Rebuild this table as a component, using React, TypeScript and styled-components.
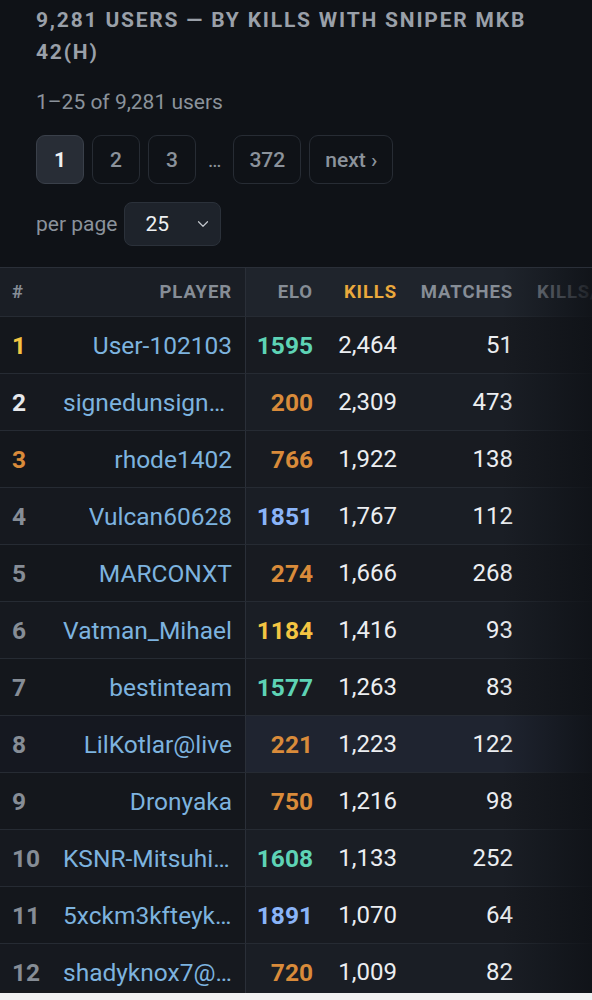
import React from 'react';
import styled, { createGlobalStyle } from 'styled-components';
import { ChevronDown } from 'lucide-react';

const GlobalStyle = createGlobalStyle`
  html, body {
    margin: 0;
    padding: 0;
    background: #0f1217;
  }
  body {
    font-family: Roboto, "Noto Sans", sans-serif;
    color: #e8eaed;
  }
  * { box-sizing: border-box; }
`;

type Player = {
  name: string;
  elo: number;
  kills: number;
  matches: number;
};

const players: Player[] = [
  { name: 'User-102103', elo: 1595, kills: 2464, matches: 51 },
  { name: 'signedunsigned', elo: 200, kills: 2309, matches: 473 },
  { name: 'rhode1402', elo: 766, kills: 1922, matches: 138 },
  { name: 'Vulcan60628', elo: 1851, kills: 1767, matches: 112 },
  { name: 'MARCONXT', elo: 274, kills: 1666, matches: 268 },
  { name: 'Vatman_Mihael', elo: 1184, kills: 1416, matches: 93 },
  { name: 'bestinteam', elo: 1577, kills: 1263, matches: 83 },
  { name: 'LilKotlar@live', elo: 221, kills: 1223, matches: 122 },
  { name: 'Dronyaka', elo: 750, kills: 1216, matches: 98 },
  { name: 'KSNR-Mitsuhide', elo: 1608, kills: 1133, matches: 252 },
  { name: '5xckm3kfteyku7', elo: 1891, kills: 1070, matches: 64 },
  { name: 'shadyknox7@gmail', elo: 720, kills: 1009, matches: 82 },
];

// elo tiers: blue > teal > gold > bronze
const eloColor = (elo: number) => {
  if (elo >= 1800) return '#8ab4f8';
  if (elo >= 1500) return '#5ed3b5';
  if (elo >= 1000) return '#f4c542';
  return '#d98b3a';
};

const rankColor = (rank: number) => {
  if (rank === 1) return '#f4c542';
  if (rank === 2) return '#e6e8eb';
  if (rank === 3) return '#d98b3a';
  return '#868d96';
};

const COLS = '50px 196px 79px 84px 116px 150px';

const Page = styled.div`
  min-height: 1000px;
  background: #0f1217;
`;

const Top = styled.section`
  padding: 4px 20px 0 36px;
`;

const Title = styled.h2`
  margin: 0;
  font-size: 21px;
  line-height: 32px;
  font-weight: 700;
  letter-spacing: 1.8px;
  text-transform: uppercase;
  color: #9aa0a9;
`;

const Summary = styled.p`
  margin: 20px 0 0;
  font-size: 21px;
  line-height: 28px;
  color: #8b929b;
`;

const Pager = styled.nav`
  display: flex;
  align-items: center;
  gap: 8px;
  margin-top: 19px;
`;

const PageButton = styled.button<{ $active?: boolean }>`
  height: 49px;
  min-width: 48px;
  padding: 0 15px;
  border-radius: 9px;
  border: 1px solid ${p => (p.$active ? '#3a404a' : '#272c34')};
  background: ${p => (p.$active ? '#282d36' : 'transparent')};
  color: ${p => (p.$active ? '#eef0f2' : '#8b929b')};
  font-family: inherit;
  font-size: 21px;
  font-weight: ${p => (p.$active ? 700 : 500)};
`;

const Dots = styled.span`
  padding: 0 4px;
  font-size: 20px;
  color: #8b929b;
`;

const PerPage = styled.div`
  display: flex;
  align-items: center;
  gap: 7px;
  margin-top: 18px;
  font-size: 21px;
  color: #8b929b;
`;

const Select = styled.div`
  display: flex;
  align-items: center;
  justify-content: space-between;
  width: 97px;
  height: 44px;
  padding: 0 8px 0 20px;
  border-radius: 8px;
  border: 1px solid #2b313a;
  background: #1e232b;
  color: #eef0f2;
  font-size: 21px;
`;

const TableWrap = styled.div`
  position: relative;
  margin-top: 21px;
  overflow: hidden;
  border-top: 1px solid #2a2f38;
`;

const Fade = styled.div`
  position: absolute;
  top: 0;
  right: 0;
  bottom: 0;
  width: 90px;
  pointer-events: none;
  background: linear-gradient(to right, rgba(15, 18, 23, 0), rgba(15, 18, 23, 0.88));
`;

const Row = styled.div<{ $head?: boolean }>`
  display: grid;
  grid-template-columns: ${COLS};
  width: 675px;
  height: ${p => (p.$head ? 49 : 57)}px;
  border-bottom: 1px solid #262b33;
`;

const Cell = styled.div<{ $sticky?: boolean; $head?: boolean; $alt?: boolean; $hot?: boolean; $align?: 'left' | 'right' }>`
  display: flex;
  align-items: center;
  justify-content: ${p => (p.$align === 'left' ? 'flex-start' : 'flex-end')};
  padding: 0 12px;
  min-width: 0;
  background: ${p =>
    p.$head
      ? p.$sticky ? '#1a1e25' : '#1f242c'
      : p.$hot
        ? p.$sticky ? '#151820' : '#1f2430'
        : p.$sticky
          ? p.$alt ? '#16191f' : '#14171c'
          : p.$alt ? '#1a1e25' : '#181b21'};
`;

const PlayerCell = styled(Cell)`
  padding: 0 13px;
  border-right: 1px solid #2a2f38;
`;

const HeadText = styled.span<{ $accent?: boolean }>`
  font-size: 18.5px;
  font-weight: 700;
  letter-spacing: 0.9px;
  text-transform: uppercase;
  white-space: nowrap;
  color: ${p => (p.$accent ? '#eaa93c' : '#868d96')};
`;

const Rank = styled.span<{ $color: string }>`
  font-size: 24.5px;
  font-weight: 700;
  color: ${p => p.$color};
`;

const Name = styled.span`
  display: block;
  max-width: 100%;
  overflow: hidden;
  white-space: nowrap;
  text-overflow: ellipsis;
  text-align: right;
  font-size: 24.5px;
  color: #7db3df;
`;

const Elo = styled.span<{ $color: string }>`
  font-size: 24.5px;
  font-weight: 700;
  color: ${p => p.$color};
`;

const Num = styled.span`
  font-size: 24px;
  color: #eceef1;
`;

const BottomBar = styled.div`
  position: fixed;
  left: 0;
  right: 0;
  bottom: 0;
  height: 7px;
  background: #f1f1f2;
`;

const fmt = (n: number) => n.toLocaleString('en-US');

export default function App() {
  return (
    <Page>
      <GlobalStyle />
      <Top>
        <Title>9,281 users — by kills with Sniper MKB 42(H)</Title>
        <Summary>1–25 of 9,281 users</Summary>
        <Pager>
          <PageButton $active>1</PageButton>
          <PageButton>2</PageButton>
          <PageButton>3</PageButton>
          <Dots>…</Dots>
          <PageButton>372</PageButton>
          <PageButton>next ›</PageButton>
        </Pager>
        <PerPage>
          per page
          <Select>
            25
            <ChevronDown size={18} strokeWidth={1.6} color="#c2c6cc" />
          </Select>
        </PerPage>
      </Top>

      <TableWrap>
        <Row $head>
          <Cell $head $sticky $align="left"><HeadText>#</HeadText></Cell>
          <PlayerCell $head $sticky><HeadText>Player</HeadText></PlayerCell>
          <Cell $head><HeadText>Elo</HeadText></Cell>
          <Cell $head><HeadText $accent>Kills</HeadText></Cell>
          <Cell $head><HeadText>Matches</HeadText></Cell>
          <Cell $head $align="left"><HeadText>Kills/match</HeadText></Cell>
        </Row>
        {players.map((p, i) => {
          const rank = i + 1;
          const alt = i % 2 === 1;
          const hot = rank === 8;
          return (
            <Row key={p.name}>
              <Cell $sticky $alt={alt} $hot={hot} $align="left">
                <Rank $color={rankColor(rank)}>{rank}</Rank>
              </Cell>
              <PlayerCell $sticky $alt={alt} $hot={hot}>
                <Name>{p.name}</Name>
              </PlayerCell>
              <Cell $alt={alt} $hot={hot}>
                <Elo $color={eloColor(p.elo)}>{p.elo}</Elo>
              </Cell>
              <Cell $alt={alt} $hot={hot}><Num>{fmt(p.kills)}</Num></Cell>
              <Cell $alt={alt} $hot={hot}><Num>{p.matches}</Num></Cell>
              <Cell $alt={alt} $hot={hot}><Num>{(p.kills / p.matches).toFixed(2)}</Num></Cell>
            </Row>
          );
        })}
        <Fade />
      </TableWrap>
      <BottomBar />
    </Page>
  );
}
